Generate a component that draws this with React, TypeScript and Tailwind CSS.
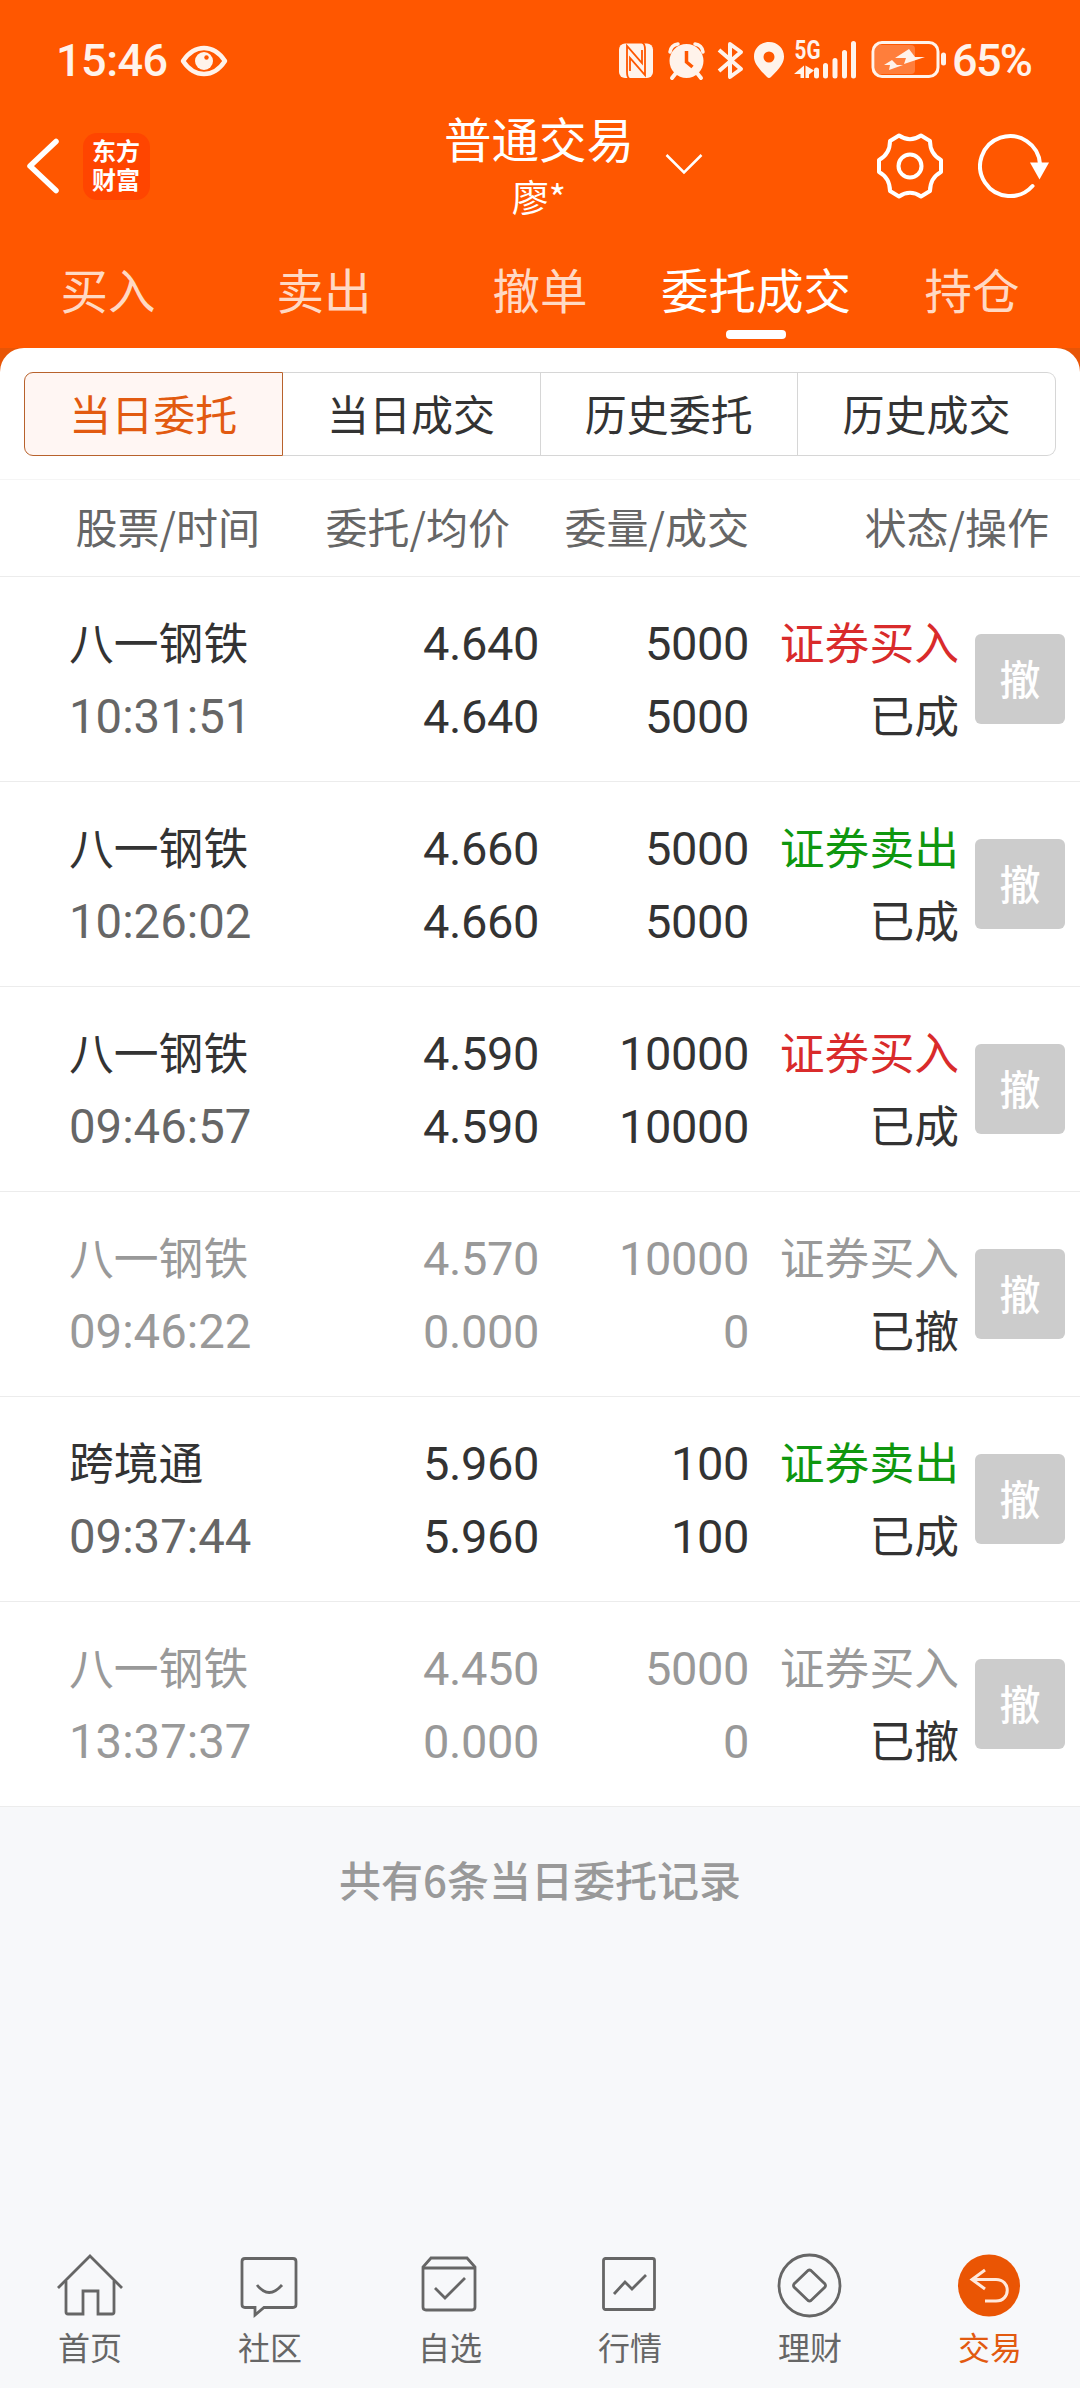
import React from "react";
import clsx from "clsx";

type Side = "buy" | "sell";

interface Order {
  name: string;
  time: string;
  price: string;
  avg: string;
  volume: string;
  filled: string;
  side: Side;
  status: string;
  cancelled?: boolean;
}

const orders: Order[] = [
  { name: "八一钢铁", time: "10:31:51", price: "4.640", avg: "4.640", volume: "5000", filled: "5000", side: "buy", status: "已成" },
  { name: "八一钢铁", time: "10:26:02", price: "4.660", avg: "4.660", volume: "5000", filled: "5000", side: "sell", status: "已成" },
  { name: "八一钢铁", time: "09:46:57", price: "4.590", avg: "4.590", volume: "10000", filled: "10000", side: "buy", status: "已成" },
  { name: "八一钢铁", time: "09:46:22", price: "4.570", avg: "0.000", volume: "10000", filled: "0", side: "buy", status: "已撤", cancelled: true },
  { name: "跨境通", time: "09:37:44", price: "5.960", avg: "5.960", volume: "100", filled: "100", side: "sell", status: "已成" },
  { name: "八一钢铁", time: "13:37:37", price: "4.450", avg: "0.000", volume: "5000", filled: "0", side: "buy", status: "已撤", cancelled: true },
];

const tabs = ["买入", "卖出", "撤单", "委托成交", "持仓"];
const segments = ["当日委托", "当日成交", "历史委托", "历史成交"];

const StatusBar = () => (
  <div className="flex h-[120px] items-start pt-[36px] text-[#fff3eb]">
    <span className="ml-[56px] w-[121px] font-['Roboto','Noto_Sans_CJK_SC',sans-serif] text-[45px] font-medium leading-[50px] tracking-[-0.5px]">15:46</span>
    <svg className="ml-[3px] mt-[9px]" width="48" height="32" viewBox="0 0 48 32" fill="none">
      <path d="M3 16C9 7 16 3 24 3s15 4 21 13c-6 9-13 13-21 13S9 25 3 16Z" stroke="currentColor" strokeWidth="4.500" strokeLinejoin="round" />
      <circle cx="24" cy="16" r="9" fill="currentColor" />
      <circle cx="26.500" cy="12.500" r="2.200" fill="#ff5700" />
    </svg>
    <svg className="ml-[391px] mt-[-6px]" width="330" height="52" viewBox="620 30 330 52" fill="none">
      {/* nfc */}
      <rect x="620" y="43.500" width="34" height="34.500" rx="6" fill="currentColor" />
      <path d="M631 79q-3-1-3-7V46l15 17V50M643 42.500q3 1 3 7V75l-15-17v13" stroke="#ff5700" strokeWidth="1.800" />
      {/* alarm */}
      <circle cx="687.500" cy="61" r="17" fill="currentColor" />
      <path d="M671 52q1-7 8-8M704 52q-1-7-8-8" stroke="currentColor" strokeWidth="3.500" strokeLinecap="round" />
      <path d="m677 73-4 5M698 73l4 5" stroke="currentColor" strokeWidth="4" strokeLinecap="round" />
      <path d="M687.500 51v11l6 5" stroke="#ff5700" strokeWidth="3.500" />
      {/* bluetooth */}
      <path d="m720 50 22 19-11 8V44l11 8-22 19" stroke="currentColor" strokeWidth="4" strokeLinejoin="round" />
      {/* location */}
      <path fillRule="evenodd" d="M770 42c8.500 0 15 6.300 15 14.500 0 6-3 10.500-13 20.500q-2 2-4 0c-10-10-13-14.500-13-20.500C755 48.300 761.500 42 770 42Zm0 9.500a5.500 5.500 0 1 0 0 11 5.500 5.500 0 0 0 0-11Z" fill="currentColor" />
      {/* signal */}
      <text x="795.500" y="59" fontSize="25" fontWeight="700" fill="currentColor" fontFamily="Roboto, sans-serif" textLength="26" lengthAdjust="spacingAndGlyphs">5G</text>
      <path d="M798 74h3.500v4h3.500V65.500L795 74ZM806.500 65.500V78h3.500v-3.500l5-4Z" fill="currentColor" />
      <path d="M817.500 70v6M826.500 65.500v10.500M836 60.500v15.500M845.500 52.500v23.500M854.500 43.500v32.500" stroke="currentColor" strokeWidth="5" strokeLinecap="round" />
      {/* battery */}
      <rect x="876" y="45" width="40" height="29" rx="4" fill="#fff3eb" opacity="0.250" />
      <rect x="874" y="42.500" width="65" height="34" rx="9" stroke="currentColor" strokeWidth="3" />
      <rect x="942" y="52.500" width="5" height="13" rx="2.500" fill="currentColor" />
      <path d="m910 49-14 9h11l-2 6 21-7h-10ZM893 60l-8 5h6l-1 5 14-5h-6Z" fill="currentColor" />
    </svg>
    <span className="ml-[3px] font-['Roboto','Noto_Sans_CJK_SC',sans-serif] text-[45px] font-medium leading-[50px] tracking-[-1.700px]">65%</span>
  </div>
);

const Header = () => (
  <div className="flex h-[113px] items-start">
    <svg className="ml-[24px] mt-[16px]" width="38" height="60" viewBox="0 0 38 60" fill="none">
      <path d="M32 5.500 6 30l26 24.500" stroke="#fff" strokeWidth="5.500" strokeLinecap="round" strokeLinejoin="round" />
    </svg>
    <div className="ml-[21px] mt-[13px] flex size-[67px] items-center justify-center rounded-[14px] bg-[#ff4500]">
      <span className="mt-[-5px] w-[49px] break-all text-[24px] font-bold leading-[29px] text-white">东方财富</span>
    </div>
    <div className="ml-[290px] flex w-[198px] flex-col items-center text-white">
      <h1 className="mt-[-10px] text-[47.500px] leading-[56px]">普通交易</h1>
      <p className="mt-[8px] text-[37px] leading-[44px]">廖*</p>
    </div>
    <svg className="ml-[27px] mt-[33px]" width="38" height="22" viewBox="0 0 38 22" fill="none">
      <path d="m1.500 2 17.500 17.500L36.500 2" stroke="#fff" strokeWidth="2.500" />
    </svg>
    <svg className="ml-[173px] mt-[12px]" width="68" height="68" viewBox="0 0 68 68" fill="none" stroke="#fff" strokeWidth="4">
      <path d="M23 3.500Q34 11 45 3.500L54 9Q54 22 65 28V40Q54 46 54 59L45 64.500Q34 57 23 64.500L14 59Q14 46 3 40V28Q14 22 14 9Z" strokeLinejoin="round" />
      <circle cx="34" cy="34" r="11.500" />
    </svg>
    <svg className="ml-[34px] mt-[12px]" width="74" height="68" viewBox="0 0 74 68" fill="none">
      <path d="M54.500 54A30 30 0 1 1 62 32" stroke="#fff" strokeWidth="4" strokeLinecap="round" />
      <path d="M52 30.500h19l-9.500 17Z" fill="#fff" />
    </svg>
  </div>
);

const Tabs = () => (
  <div className="grid h-[115px] grid-cols-5">
    {tabs.map((tab) => {
      const active = tab === "委托成交";
      return (
        <div key={tab} className="flex flex-col items-center pt-[28px]">
          <span className={clsx("whitespace-nowrap text-[47.500px] leading-[56px]", active ? "text-white" : "text-[#ffd9c4]")}>{tab}</span>
          {active && <div className="mt-[13px] h-[9px] w-[60px] rounded-[4px] bg-white" />}
        </div>
      );
    })}
  </div>
);

const Segments = () => (
  <div className="flex px-[24px] pb-[23px] pt-[24px]">
    {segments.map((label, i) => (
      <div
        key={label}
        className={clsx(
          "flex h-[84px] flex-1 items-center justify-center border pb-[4px] text-[42px]",
          i === 0 ? "rounded-l-[9px] border-[#b8622c] bg-[#fff6f3] text-[#e25a10]" : "border-l-0 border-[#d6d6d6] text-[#333]",
          i === segments.length - 1 && "rounded-r-[9px]"
        )}
      >
        {label}
      </div>
    ))}
  </div>
);

const ListHeader = () => (
  <div className="flex h-[98px] items-center border-b border-t border-b-[#ececec] border-t-[#f5f5f5] pb-[5px] text-[42px] text-[#666]">
    <span className="w-[260px] text-right">股票/时间</span>
    <span className="w-[250px] text-right">委托/均价</span>
    <span className="w-[239px] text-right">委量/成交</span>
    <span className="w-[300px] text-right">状态/操作</span>
  </div>
);

const OrderRow: React.FC<{ order: Order }> = ({ order }) => {
  const main = order.cancelled ? "text-[#999]" : "text-[#333]";
  const sideColor = order.side === "buy" ? "text-[#d92b2b]" : "text-[#0f970f]";

  return (
    <div className="flex h-[205px] items-center border-b border-[#ececec] text-[44.800px] leading-[73px]">
      <div className="mt-[-2px] w-[230px] pl-[69px]">
        <p className={clsx("whitespace-nowrap", main)}>{order.name}</p>
        <p className={clsx("mt-[5px] whitespace-nowrap font-['Roboto','Noto_Sans_CJK_SC',sans-serif] text-[47.300px] leading-[70px]", order.cancelled ? "text-[#999]" : "text-[#666]")}>{order.time}</p>
      </div>
      <div className={clsx("mt-[2px] w-[309px] text-right font-['Roboto','Noto_Sans_CJK_SC',sans-serif] text-[47px] tracking-[-0.400px]", main)}>
        <p>{order.price}</p>
        <p>{order.avg}</p>
      </div>
      <div className={clsx("mt-[2px] w-[210px] text-right font-['Roboto','Noto_Sans_CJK_SC',sans-serif] text-[47px] tracking-[-0.400px]", main)}>
        <p>{order.volume}</p>
        <p>{order.filled}</p>
      </div>
      <div className="mt-[-4px] w-[210px] text-right">
        <p className={order.cancelled ? "text-[#999]" : sideColor}>{order.side === "buy" ? "证券买入" : "证券卖出"}</p>
        <p className="text-[#333]">{order.status}</p>
      </div>
      <button className="ml-[16px] size-[90px] rounded-[6px] bg-[#ccc] pb-[3px] text-[41px] font-medium leading-none text-white">撤</button>
    </div>
  );
};

const navItems = [
  {
    label: "首页",
    icon: (
      <>
        <path d="M3 36 35 4l32 32" />
        <path d="M11 29v31q0 2 2 2h15V39h15v23h14q2 0 2-2V29" />
      </>
    ),
  },
  {
    label: "社区",
    icon: (
      <>
        <path d="M10 6.500h48q3 0 3 3v43q0 3-3 3H29l-9 7.500v-7.500H10q-3 0-3-3v-43q0-3 3-3Z" />
        <path d="M22 33q12 15 25 0" />
      </>
    ),
  },
  {
    label: "自选",
    icon: (
      <>
        <path d="M8 15v40q0 3 3 3h46q3 0 3-3V15l-8-9H16Z" />
        <path d="M8 16h52M20 36l10 10 20-20" />
      </>
    ),
  },
  {
    label: "行情",
    icon: (
      <>
        <rect x="8.500" y="6.500" width="51" height="51" rx="2" />
        <path d="m19 42 11-12 7 7 14-14" />
      </>
    ),
  },
  {
    label: "理财",
    icon: (
      <>
        <circle cx="34.500" cy="33.500" r="30.500" />
        <path d="m33 18.500-14 13.500q-1 1.500 0 3l14 13.500q1.500 1 3 0L50 35q1-1.500 0-3L36 18.500q-1.500-1-3 0Z" />
      </>
    ),
  },
  {
    label: "交易",
    active: true,
    icon: (
      <>
        <circle cx="34" cy="33.500" r="31" fill="#ea5504" stroke="none" />
        <path d="M30 18 17 27.500 30 37M17 27.500h24c15 0 15 21.500 0 21.500H30" stroke="#ffe9dc" strokeWidth="3" />
      </>
    ),
  },
];

const BottomNav = () => (
  <nav className="grid h-[136px] grid-cols-6">
    {navItems.map(({ label, icon, active }) => (
      <div key={label} className={clsx("flex flex-col items-center", active ? "text-[#e25a10]" : "text-[#666]")}>
        <svg width="70" height="70" viewBox="0 0 70 70" fill="none" stroke="currentColor" strokeWidth="2.800">
          {icon}
        </svg>
        <span className="mt-[4px] text-[32px] leading-[40px]">{label}</span>
      </div>
    ))}
  </nav>
);

const App = () => {
  return (
    <div className="flex h-[2388px] w-[1080px] flex-col overflow-hidden bg-[#f7f8fa] font-['Noto_Sans_CJK_SC',sans-serif]">
      <div className="bg-[#ff5700]">
        <StatusBar />
        <Header />
        <Tabs />
      </div>
      <div className="bg-[linear-gradient(#e85506_24px,#fff_24px)]">
        <div className="rounded-t-[24px] bg-white">
          <Segments />
          <ListHeader />
          {orders.map((order) => (
            <OrderRow key={order.time} order={order} />
          ))}
        </div>
      </div>
      <p className="mt-[47px] text-center text-[42px] font-medium leading-[50px] text-[#999]">共有6条当日委托记录</p>
      <div className="mt-auto">
        <BottomNav />
      </div>
    </div>
  );
};

export default App;
